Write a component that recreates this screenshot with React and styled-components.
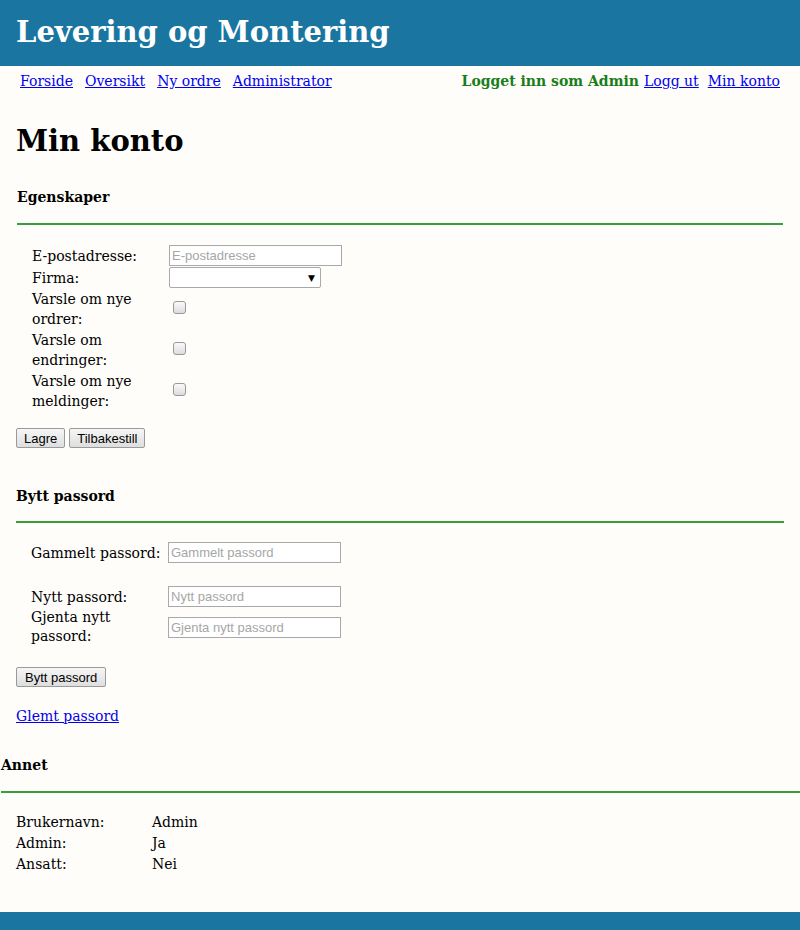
import React from "react";
import styled, { createGlobalStyle } from "styled-components";

const Global = createGlobalStyle`
  html, body { margin: 0; padding: 0; }
  body {
    background: #fefdfa;
    font-family: "DejaVu Serif", Georgia, serif;
    font-size: 14px;
    color: #000;
  }
`;

const Page = styled.div`
  min-height: 930px;
  display: flex;
  flex-direction: column;
`;

const Header = styled.header`
  height: 66px;
  background: #1a76a1;
  display: flex;
  align-items: center;
  padding-left: 16px;
`;

const Title = styled.h1`
  margin: 0;
  color: #fff;
  font-size: 29px;
  font-weight: bold;
  line-height: 1;
  padding-bottom: 2px;
`;

const Nav = styled.nav`
  display: flex;
  justify-content: space-between;
  align-items: center;
  height: 30px;
  padding: 0 20px;
`;

const NavGroup = styled.div`
  display: flex;
  align-items: center;
  gap: ${(p) => p.$gap || 12}px;
`;

const Link = styled.a`
  color: #0000ee;
  text-decoration: underline;
  cursor: pointer;
`;

const LoggedIn = styled.span`
  color: #1a7d1a;
  font-weight: bold;
  margin-right: -4px;
`;

const Main = styled.main`
  padding: 0 16px;
`;

const PageTitle = styled.h1`
  margin: 25px 0 0;
  font-size: 29px;
  line-height: 40px;
  font-weight: bold;
`;

const Section = styled.section`
  margin-left: ${(p) => p.$indent || 0}px;
  margin-right: ${(p) => p.$right || 0}px;
`;

const SectionTitle = styled.h4`
  margin: ${(p) => p.$top || 20}px 0 0;
  font-size: 14px;
  line-height: 20px;
  font-weight: bold;
`;

const Rule = styled.div`
  height: 2px;
  background: #3b9c3b;
  margin-top: ${(p) => p.$top || 16}px;
`;

const FormGrid = styled.div`
  display: grid;
  grid-template-columns: 137px auto;
  row-gap: ${(p) => p.$gap || 1}px;
  padding-left: 15px;
  margin-top: ${(p) => p.$top || 21}px;
  align-items: center;
  justify-items: start;
`;

const Label = styled.div`
  line-height: ${(p) => p.$lh || 20}px;
  width: 132px;
`;

const TextInput = styled.input`
  box-sizing: border-box;
  width: 173px;
  height: 21px;
  border: 1px solid #a9a9a9;
  background: #fff;
  padding: 1px 2px;
  font-family: "Liberation Sans", Arial, sans-serif;
  font-size: 13px;
  &::placeholder { color: #a6a6a6; }
`;

const Select = styled.div`
  box-sizing: border-box;
  width: 152px;
  height: 21px;
  border: 1px solid #a9a9a9;
  border-radius: 2px;
  background: #fff;
  display: flex;
  justify-content: flex-end;
  align-items: center;
  padding-right: 5px;
  font-size: 9px;
  font-family: "DejaVu Sans", sans-serif;
`;

const Check = styled.span`
  display: inline-block;
  box-sizing: border-box;
  width: 13px;
  height: 13px;
  border: 1px solid #999;
  border-radius: 3px;
  background: linear-gradient(#fafafa, #dcdcdc);
  margin: 0 0 3px 4px;
`;

const Spacer = styled.div`
  height: ${(p) => p.$h}px;
  grid-column: 1 / -1;
`;

const Buttons = styled.div`
  display: flex;
  gap: 4px;
  margin-top: ${(p) => p.$top || 19}px;
`;

const Button = styled.button`
  height: 20px;
  padding: 0 ${(p) => p.$pad || 7}px;
  border: 1px solid #9a9a9a;
  border-radius: 2px;
  background: linear-gradient(#f6f6f6, #dedede);
  font-family: "Liberation Sans", Arial, sans-serif;
  font-size: 13px;
  color: #000;
`;

const Forgot = styled.div`
  margin-top: 19px;
  line-height: 20px;
`;

const InfoTable = styled.div`
  display: grid;
  grid-template-columns: 136px auto;
  padding-left: 15px;
  margin-top: 19px;
  line-height: 21px;
`;

const Footer = styled.footer`
  margin-top: auto;
  height: 18px;
  background: #1a76a1;
`;

export default function App() {
  return (
    <Page>
      <Global />
      <Header>
        <Title>Levering og Montering</Title>
      </Header>
      <Nav>
        <NavGroup>
          <Link>Forside</Link>
          <Link>Oversikt</Link>
          <Link>Ny ordre</Link>
          <Link>Administrator</Link>
        </NavGroup>
        <NavGroup $gap={9}>
          <LoggedIn>Logget inn som Admin</LoggedIn>
          <Link>Logg ut</Link>
          <Link>Min konto</Link>
        </NavGroup>
      </Nav>
      <Main>
        <PageTitle>Min konto</PageTitle>
        <Section $indent={1} $right={1}>
          <SectionTitle $top={26}>Egenskaper</SectionTitle>
          <Rule />
          <FormGrid $top={20}>
            <Label>E-postadresse:</Label>
            <TextInput placeholder="E-postadresse" />
            <Label>Firma:</Label>
            <Select>▼</Select>
            <Label>Varsle om nye ordrer:</Label>
            <Check />
            <Label>Varsle om endringer:</Label>
            <Check />
            <Label>Varsle om nye meldinger:</Label>
            <Check />
          </FormGrid>
        </Section>
        <Buttons $top={17}>
          <Button>Lagre</Button>
          <Button>Tilbakestill</Button>
        </Buttons>
        <Section>
          <SectionTitle $top={38}>Bytt passord</SectionTitle>
          <Rule $top={15} />
          <FormGrid $top={19}>
            <Label>Gammelt passord:</Label>
            <TextInput placeholder="Gammelt passord" />
            <Spacer $h={21} />
            <Label>Nytt passord:</Label>
            <TextInput placeholder="Nytt passord" />
            <Label $lh={19}>Gjenta nytt passord:</Label>
            <TextInput placeholder="Gjenta nytt passord" />
          </FormGrid>
          <Buttons $top={21}>
            <Button $pad={8}>Bytt passord</Button>
          </Buttons>
          <Forgot>
            <Link>Glemt passord</Link>
          </Forgot>
        </Section>
      </Main>
      <Section $indent={1}>
        <SectionTitle $top={29}>Annet</SectionTitle>
        <Rule />
        <InfoTable>
          <span>Brukernavn:</span>
          <span>Admin</span>
          <span>Admin:</span>
          <span>Ja</span>
          <span>Ansatt:</span>
          <span>Nei</span>
        </InfoTable>
      </Section>
      <Footer />
    </Page>
  );
}
